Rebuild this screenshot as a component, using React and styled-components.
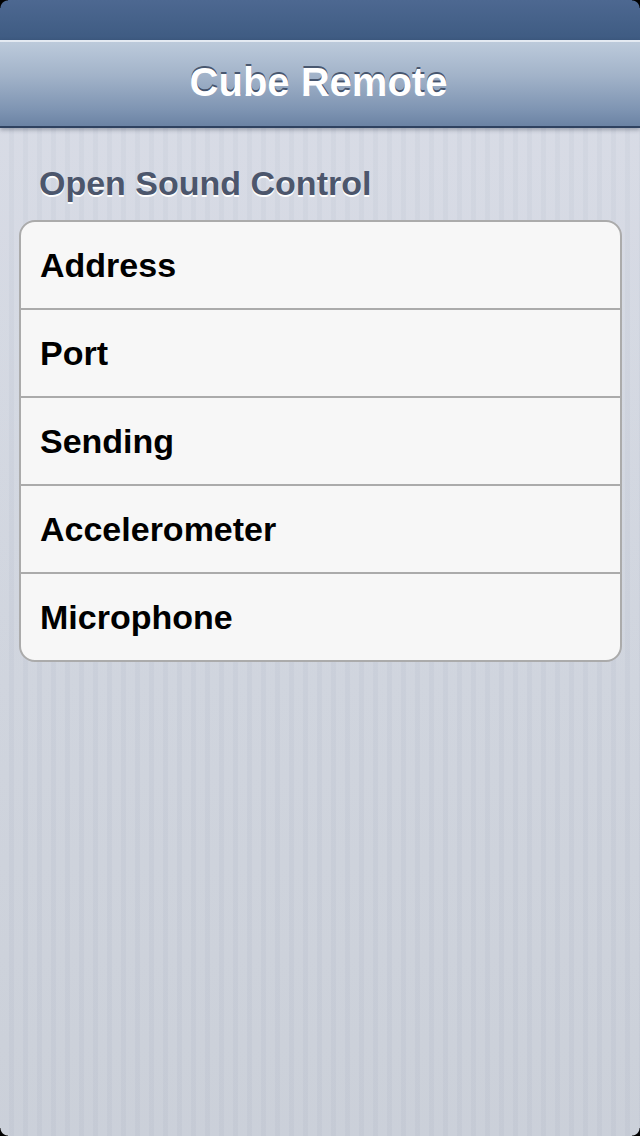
import React from 'react';
import styled, { createGlobalStyle } from 'styled-components';

// Global reset and base styles
const GlobalStyle = createGlobalStyle`
  * {
    box-sizing: border-box;
    margin: 0;
    padding: 0;
  }
  body {
    font-family: Helvetica, 'Liberation Sans', Arial, sans-serif;
    background: #cdd2dc;
    -webkit-font-smoothing: antialiased;
  }
`;

const Screen = styled.div`
  position: relative;
  width: 640px;
  min-height: 1136px;
  display: flex;
  flex-direction: column;
  overflow: hidden;
  background:
    repeating-linear-gradient(
      90deg,
      rgba(255, 255, 255, 0.04) 0px,
      rgba(255, 255, 255, 0.04) 9px,
      rgba(110, 120, 145, 0.04) 9px,
      rgba(110, 120, 145, 0.04) 14px
    ),
    linear-gradient(180deg, #d8dce6 0%, #ced3dd 60%, #c9ced8 100%);
`;

const StatusBar = styled.div`
  height: 40px;
  flex-shrink: 0;
  background: linear-gradient(180deg, #4d6891 0%, #3e5b82 100%);
`;

const NavBar = styled.header`
  position: relative;
  height: 88px;
  flex-shrink: 0;
  display: flex;
  align-items: center;
  justify-content: center;
  border-top: 2px solid #e4eaf2;
  border-bottom: 2px solid #2f4260;
  background: linear-gradient(180deg, #bccadb 0%, #a2b3c9 40%, #7f95b3 80%, #6b83a4 100%);
  box-shadow: 0 2px 4px rgba(40, 50, 70, 0.35);
  z-index: 1;
`;

const Title = styled.h1`
  color: #ffffff;
  font-size: 40px;
  font-weight: bold;
  line-height: 1;
  margin-top: -4px;
  margin-left: -3px;
  text-shadow: 0 -2px 0 rgba(30, 45, 70, 0.7);
`;

const Content = styled.main`
  padding: 38px 18px 0 19px;
  display: flex;
  flex-direction: column;
`;

const SectionHeader = styled.h2`
  color: #4c566c;
  font-size: 34px;
  font-weight: bold;
  line-height: 34px;
  padding-left: 20px;
  margin-bottom: 20px;
  text-shadow: 0 2px 0 #ffffff;
`;

const Group = styled.ul`
  list-style: none;
  background: #f7f7f7;
  border: 2px solid #ababab;
  border-radius: 16px;
  overflow: hidden;
`;

const Row = styled.li`
  height: ${p => (p.first ? '86px' : '88px')};
  display: flex;
  align-items: center;
  padding-left: 19px;
  border-top: ${p => (p.first ? 'none' : '2px solid #ababab')};
  color: #000000;
  font-size: 34px;
  font-weight: bold;
`;

const Corner = styled.div`
  position: absolute;
  width: 8px;
  height: 8px;
  ${p => (p.top ? 'top: 0;' : 'bottom: 0;')}
  ${p => (p.left ? 'left: 0;' : 'right: 0;')}
  background: radial-gradient(
    circle at ${p => (p.left ? '100%' : '0%')} ${p => (p.top ? '100%' : '0%')},
    transparent 7px,
    #000 8px
  );
  z-index: 2;
`;

const items = ['Address', 'Port', 'Sending', 'Accelerometer', 'Microphone'];

export default function App() {
  return (
    <>
      <GlobalStyle />
      <Screen>
        <StatusBar />
        <NavBar>
          <Title>Cube Remote</Title>
        </NavBar>
        <Content>
          <SectionHeader>Open Sound Control</SectionHeader>
          <Group>
            {items.map((item, i) => (
              <Row key={item} first={i === 0}>
                {item}
              </Row>
            ))}
          </Group>
        </Content>
        <Corner top left />
        <Corner top />
        <Corner left />
        <Corner />
      </Screen>
    </>
  );
}
